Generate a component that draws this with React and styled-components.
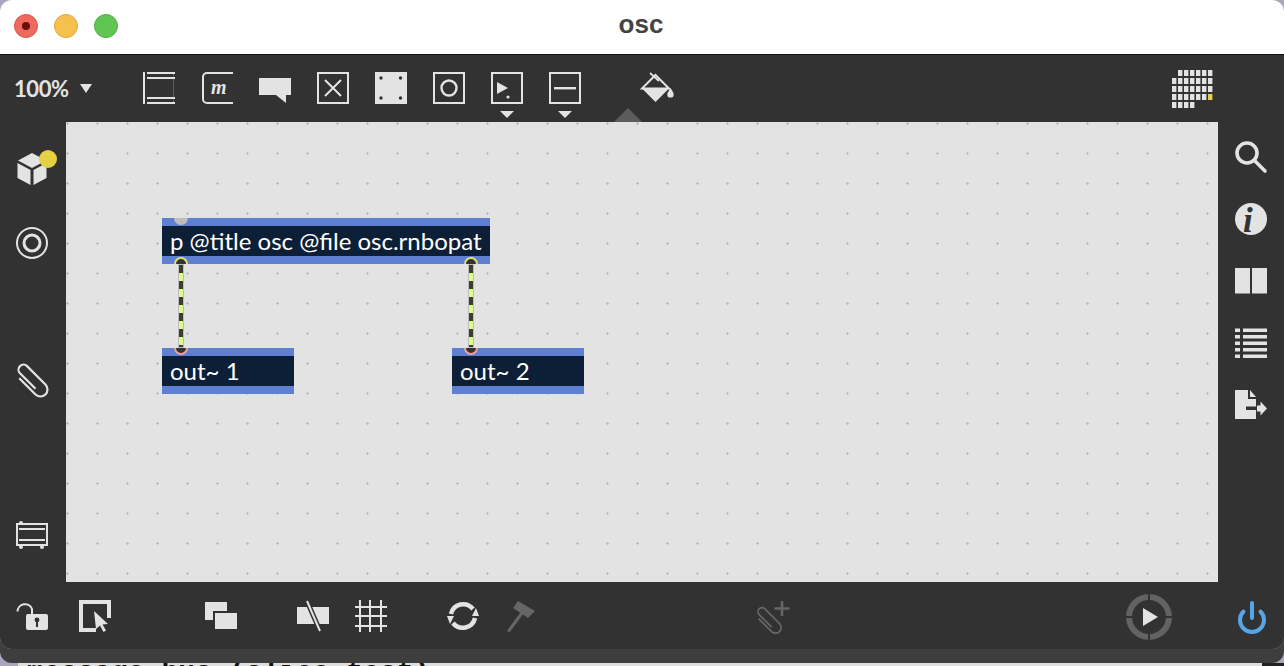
import React from "react"
import styled, { createGlobalStyle } from "styled-components"

const Global = createGlobalStyle`
  html, body {
    margin: 0;
    width: 1284px;
    height: 666px;
    overflow: hidden;
    background: #a7a7bd;
    font-family: "Lato", "Liberation Sans", sans-serif;
  }
`

const LIGHT = "#e3e3e3"
const DARK = "#323232"
const MUTED = "#666666"

const Window = styled.div`
  width: 1284px;
  height: 649px;
  display: flex;
  flex-direction: column;
  border-radius: 12px;
  overflow: hidden;
  box-shadow: 0 14px 0 #3e3e3e;
`

const TitleBar = styled.header`
  position: relative;
  height: 54px;
  flex: none;
  box-sizing: content-box;
  display: flex;
  align-items: center;
  justify-content: center;
  background: #ffffff;
  border-bottom: 1px solid #111111;
`

const Lights = styled.div`
  position: absolute;
  left: 14px;
  top: 14px;
  display: flex;
  gap: 16px;
`

const Light = styled.span`
  width: 24px;
  height: 24px;
  box-sizing: border-box;
  border-radius: 50%;
  background: ${p => p.$color};
  border: 1px solid ${p => p.$edge};
  display: flex;
  align-items: center;
  justify-content: center;
`

const CloseDot = styled.span`
  width: 8px;
  height: 8px;
  border-radius: 50%;
  background: #6b0f0a;
`

const Title = styled.h1`
  margin: 0 2px 6px 0;
  font: bold 26px "Liberation Sans", sans-serif;
  color: #444444;
`

const TopBar = styled.div`
  height: 67px;
  flex: none;
  box-sizing: border-box;
  display: flex;
  align-items: flex-start;
  padding: 17px 72px 0 14px;
  background: ${DARK};
`

const ZoomControl = styled.div`
  width: 129px;
  height: 32px;
  flex: none;
  display: flex;
  align-items: center;
  gap: 11px;
  font-size: 22px;
  font-weight: 700;
  letter-spacing: -0.4px;
  color: ${LIGHT};
`

const ZoomCaret = styled.span`
  width: 0;
  height: 0;
  border-left: 6px solid transparent;
  border-right: 6px solid transparent;
  border-top: 9px solid ${LIGHT};
`

const Tools = styled.div`
  display: flex;
  gap: 26px;
`

const ToolSlot = styled.div`
  position: relative;
  height: 32px;
  margin-left: ${p => p.$ml || 0}px;
  margin-top: ${p => p.$mt || 0}px;
`

const MenuCaret = styled.span`
  position: absolute;
  left: 9px;
  top: 39px;
  width: 0;
  height: 0;
  border-left: 7px solid transparent;
  border-right: 7px solid transparent;
  border-top: 7px solid ${LIGHT};
`

const PanelMarker = styled.span`
  position: absolute;
  left: -27px;
  top: 36px;
  width: 0;
  height: 0;
  border-left: 14px solid transparent;
  border-right: 14px solid transparent;
  border-bottom: 14px solid #5c5c5c;
`

const Middle = styled.div`
  height: 460px;
  flex: none;
  display: flex;
  background: ${DARK};
`

const LeftRail = styled.aside`
  width: 66px;
  flex: none;
  box-sizing: border-box;
  display: flex;
  flex-direction: column;
  align-items: center;
  padding: 31px 2px 31px 0;
`

const RightRail = styled.aside`
  width: 66px;
  flex: none;
  box-sizing: border-box;
  display: flex;
  flex-direction: column;
  align-items: center;
  gap: 30px;
  padding-top: 19px;
`

const RailItem = styled.div`
  position: relative;
  width: 32px;
  height: 32px;
  margin-top: ${p => p.$mt || 0}px;
  ${p => p.$push && "margin-top: auto;"}
`

const Badge = styled.span`
  position: absolute;
  left: 23px;
  top: -3px;
  width: 18px;
  height: 18px;
  border-radius: 50%;
  background: #e6d144;
`

const Canvas = styled.main`
  position: relative;
  flex: 1;
  background-color: ${LIGHT};
  background-image: radial-gradient(circle at 1.5px 1.5px, #bdbdbd 1px, transparent 1.4px);
  background-size: 30px 30px;
`

const PatchObject = styled.div`
  position: absolute;
  left: ${p => p.$x}px;
  top: ${p => p.$y}px;
  width: ${p => p.$w}px;
  height: 46px;
  box-sizing: border-box;
  overflow: hidden;
  background: #0d1f36;
  border-top: 8px solid #5f7fd3;
  border-bottom: 8px solid #5f7fd3;
  padding-left: 8px;
  color: #ffffff;
  font-size: 24px;
  line-height: 29px;
  white-space: nowrap;
`

const Port = styled.span`
  position: absolute;
  left: ${p => p.$x}px;
  top: ${p => p.$y}px;
  width: 14px;
  height: 14px;
  box-sizing: border-box;
  border-radius: 50%;
  background: ${p => p.$fill || "#333333"};
  border: 2px solid ${p => p.$ring};
`

const Cord = styled.div`
  position: absolute;
  left: ${p => p.$x}px;
  top: 142px;
  width: 6px;
  height: 84px;
  box-sizing: border-box;
  border: 1px solid #bcbcbc;
  background: repeating-linear-gradient(to bottom, #3c3f2c 0 8px, #dcfb8c 8px 16px);
`

const BottomBar = styled.footer`
  height: 67px;
  flex: none;
  box-sizing: border-box;
  display: flex;
  align-items: center;
  padding: 1px 0 0 16px;
  background: ${DARK};
`

const BarItem = styled.div`
  display: flex;
  flex: none;
  margin-left: ${p => p.$ml || 0}px;
`

const Backdrop = styled.div`
  margin-top: 14px;
  height: 3px;
  overflow: hidden;
  background: linear-gradient(to right, #a7a7bd 18px, #dedede 18px 1262px, #222222 1262px);
  padding-left: 27px;
  color: #111111;
  font: bold 28px/20px "Liberation Mono", monospace;
  white-space: nowrap;
`

const Glyph = styled.svg`
  display: block;
  flex: none;
  fill: ${p => p.$tone || LIGHT};
  stroke: none;
  overflow: visible;
`

const Icon = ({ w = 32, h = 32, tone, children }) => (
  <Glyph width={w} height={h} viewBox={`0 0 ${w} ${h}`} $tone={tone}>{children}</Glyph>
)

// the stroked parts all share the same settings
const Line = ({ d, c = LIGHT, sw = 2, cap = "butt" }) => (
  <path d={d} fill="none" stroke={c} strokeWidth={sw} strokeLinecap={cap} />
)

const Frame = () => <rect x="1" y="1" width="30" height="30" fill="none" stroke={LIGHT} strokeWidth="2" />

const ClipPath = ({ c }) => (
  <Line c={c} sw="2.2" d="M9 5V28a7 7 0 0 0 14 0V2a5 5 0 0 0-10 0V24" />
)

const gridCells = []
for (let r = 0; r < 5; r++) {
  for (let c = 0; c < 7; c++) {
    if (r === 0 && c === 0) continue
    if (r === 4 && c > 3) continue
    gridCells.push({ r, c, on: r === 3 && c === 6 })
  }
}

const tools = [
  <Icon key="object">
    <rect x="0" y="0" width="2" height="32" />
    <rect x="4" y="0" width="28" height="2" />
    <rect x="4" y="5" width="28" height="2" />
    <rect x="4" y="25" width="28" height="2" />
    <rect x="4" y="30" width="28" height="2" />
    <rect x="30" y="2" width="1" height="28" opacity="0.25" />
  </Icon>,
  <Icon key="message">
    <Line d="M32 1H6a4 4 0 0 0-4 4V27a4 4 0 0 0 4 4H32" />
    <text x="10" y="22" fontFamily="Liberation Serif" fontStyle="italic" fontWeight="bold" fontSize="20" fill={LIGHT}>m</text>
  </Icon>,
  <Icon key="comment">
    <polygon points="0,6 32,6 32,23 27,23 27,31 17,23 0,23" />
  </Icon>,
  <Icon key="button">
    <Frame />
    <Line d="M8 8L24 24M24 8L8 24" />
  </Icon>,
  <Icon key="toggle">
    <rect width="32" height="32" />
    <g fill={DARK}>
      <circle cx="6" cy="6" r="1.7" />
      <circle cx="25.5" cy="6" r="1.7" />
      <circle cx="6" cy="26" r="1.7" />
      <circle cx="25.5" cy="26" r="1.7" />
    </g>
  </Icon>,
  <Icon key="number">
    <Frame />
    <circle cx="16" cy="16" r="7.5" fill="none" stroke={LIGHT} strokeWidth="2.4" />
  </Icon>,
  <Icon key="play">
    <Frame />
    <polygon points="6,10 17,16 6,22" />
    <circle cx="17" cy="25" r="1.6" />
  </Icon>,
  <Icon key="slider">
    <Frame />
    <rect x="5" y="15" width="22" height="2.4" />
  </Icon>,
]

function App() {
  return (
    <>
      <Global />
      <Window>
        <TitleBar>
          <Lights>
            <Light $color="#ee6a5f" $edge="#d9564c"><CloseDot /></Light>
            <Light $color="#f6c04f" $edge="#dfa73a" />
            <Light $color="#61c554" $edge="#51ad45" />
          </Lights>
          <Title>osc</Title>
        </TitleBar>

        <TopBar>
          <ZoomControl>100%<ZoomCaret /></ZoomControl>
          <Tools>
            {tools.map((tool, i) => (
              <ToolSlot key={i}>
                {tool}
                {i >= 6 && <MenuCaret />}
              </ToolSlot>
            ))}
          </Tools>
          <ToolSlot $ml={60}>
            <PanelMarker />
            <Icon w={34}>
              <path d="M14.500 3L28 16.500H1Z" fill="none" stroke={LIGHT} strokeWidth="2" />
              <path d="M1 16.500H28L14.500 30Z" />
              <Line d="M9 1L18 9" sw="1.8" />
              <path d="M29.500 16c1.500 2.800 3.200 4.200 3.200 6.400a3.200 3.200 0 0 1-6.400 0c0-2.200 2-3.600 3.200-6.400Z" />
            </Icon>
          </ToolSlot>
          <ToolSlot $ml={497} $mt={-2}>
            <Icon w={40} h={38}>
              {gridCells.map(({ r, c, on }) => (
                <rect key={`${r}-${c}`} x={c * 6} y={r * 8} width="4.4" height="6" fill={on ? "#e6d144" : LIGHT} />
              ))}
            </Icon>
          </ToolSlot>
        </TopBar>

        <Middle>
          <LeftRail>
            <RailItem>
              <Icon>
                <polygon points="16,0 30,7.500 16,15 2,7.500" />
                <polygon points="1.500,10 14.500,17 14.500,32 1.500,25" />
                <polygon points="17.500,17 30.500,10 30.500,25 17.500,32" />
              </Icon>
              <Badge />
            </RailItem>
            <RailItem $mt={42}>
              <Icon>
                <circle cx="16" cy="16" r="15" fill="none" stroke={LIGHT} strokeWidth="2" />
                <circle cx="16" cy="16" r="8" fill="none" stroke={LIGHT} strokeWidth="3" />
              </Icon>
            </RailItem>
            <RailItem $mt={106}>
              <Icon>
                <g transform="rotate(-45 16 16)"><ClipPath /></g>
              </Icon>
            </RailItem>
            <RailItem $push>
              <Icon>
                <rect x="1" y="5" width="30" height="21" fill="none" stroke={LIGHT} strokeWidth="2" />
                <rect x="3" y="9" width="26" height="2" />
                <rect x="3" y="20" width="26" height="2" />
                <circle cx="5" cy="4" r="2" />
                <circle cx="5" cy="28" r="2" />
                <circle cx="26" cy="28" r="2" />
              </Icon>
            </RailItem>
          </LeftRail>

          <Canvas>
            <PatchObject $x={96} $y={96} $w={328}>p @title osc @file osc.rnbopat</PatchObject>
            <PatchObject $x={96} $y={226} $w={132}>out~ 1</PatchObject>
            <PatchObject $x={386} $y={226} $w={132}>out~ 2</PatchObject>
            <Port $x={108} $y={89} $fill="#bdbdbd" $ring="#bdbdbd" style={{ clipPath: "inset(7px 0 0 0)" }} />
            <Port $x={108} $y={135} $ring="#e3e36a" style={{ clipPath: "inset(0 0 7px 0)" }} />
            <Port $x={398} $y={135} $ring="#e3e36a" style={{ clipPath: "inset(0 0 7px 0)" }} />
            <Port $x={108} $y={219} $ring="#eba58f" style={{ clipPath: "inset(7px 0 0 0)" }} />
            <Port $x={398} $y={219} $ring="#eba58f" style={{ clipPath: "inset(7px 0 0 0)" }} />
            <Cord $x={112} />
            <Cord $x={402} />
          </Canvas>

          <RightRail>
            <RailItem>
              <Icon>
                <circle cx="12" cy="12" r="10" fill="none" stroke={LIGHT} strokeWidth="3.6" />
                <Line d="M19.500 19.500L30 30" sw="3.6" cap="round" />
              </Icon>
            </RailItem>
            <RailItem>
              <Icon>
                <circle cx="16" cy="16" r="16" />
                <text x="8" y="29" fontFamily="Liberation Serif" fontStyle="italic" fontWeight="bold" fontSize="35" fill={DARK}>i</text>
              </Icon>
            </RailItem>
            <RailItem>
              <Icon>
                <rect x="0" y="3" width="15" height="25.500" />
                <rect x="17" y="3" width="15" height="25.500" />
              </Icon>
            </RailItem>
            <RailItem>
              <Icon>
                {[1.5, 8, 14.5, 21, 27.5].map(y => (
                  <g key={y}>
                    <rect x="0" y={y} width="5" height="3.5" />
                    <rect x="8" y={y} width="24" height="3.5" />
                  </g>
                ))}
              </Icon>
            </RailItem>
            <RailItem>
              <Icon>
                <path d="M0 1H13V10H21V30H0Z" />
                <path d="M15 1L21 8H15Z" />
                <rect x="11" y="17.500" width="11" height="3.500" fill={DARK} />
                <polygon points="22,16.500 25.500,16.500 25.500,12.500 32,19.500 25.500,26.500 25.500,22.500 22,22.500" />
              </Icon>
            </RailItem>
          </RightRail>
        </Middle>

        <BottomBar>
          <BarItem>
            <Icon>
              <Line d="M1.500 11.500A7.500 7.500 0 0 1 16 9V15" />
              <rect x="10" y="14" width="22" height="16" rx="2" />
              <circle cx="21" cy="20" r="2.400" fill={DARK} />
              <rect x="20" y="21" width="2" height="6" fill={DARK} />
            </Icon>
          </BarItem>
          <BarItem $ml={31}>
            <Icon>
              <path d="M0 0H32V18H28V4H4V28H17V32H0Z" />
              <polygon points="15,11 29,24 23.500,24.500 27,30.500 24.500,32 21,25.500 17,29" />
            </Icon>
          </BarItem>
          <BarItem $ml={94}>
            <Icon>
              <path d="M0 2H22V11H8V20H0Z" />
              <rect x="10" y="13" width="22" height="16" />
            </Icon>
          </BarItem>
          <BarItem $ml={60}>
            <Icon>
              <rect x="0" y="7" width="32" height="17" />
              <Line d="M9.500 0L23 31" c={DARK} sw="5" />
              <Line d="M10 1L23 31" sw="2" />
            </Icon>
          </BarItem>
          <BarItem $ml={26}>
            <Icon>
              <Line d="M5 0V32M15 0V32M26 0V32M0 7H32M0 16H32M0 26H32" />
            </Icon>
          </BarItem>
          <BarItem $ml={60}>
            <Icon>
              <Line d="M4 14A12.500 12.500 0 0 1 26 9" sw="4.500" />
              <Line d="M28 18A12.500 12.500 0 0 1 6 23" sw="4.500" />
              <polygon points="0,16 7,16 3,24" />
              <polygon points="32,16 25,16 29,8" />
            </Icon>
          </BarItem>
          <BarItem $ml={28}>
            <Icon w={28} tone={MUTED}>
              <polygon points="11,1 28,11 21,18 6,8" />
              <Line d="M15 13L2 30.500" c={MUTED} sw="3" cap="round" />
            </Icon>
          </BarItem>
          <BarItem $ml={222}>
            <Icon w={34} tone={MUTED}>
              <g transform="translate(-1 8) scale(0.8) rotate(-45 16 16)"><ClipPath c={MUTED} /></g>
              <Line d="M25 1V16M17.500 8.500H32.500" c={MUTED} sw="2.600" />
            </Icon>
          </BarItem>
          <BarItem $ml={334}>
            <Icon w={48} h={48}>
              <g transform="translate(0 1)">
                <circle cx="24" cy="24" r="20" fill="none" stroke="#626262" strokeWidth="6" />
                <Line d="M24 0V9M24 39V48M0 24H9M39 24H48" c={DARK} sw="2" />
                <polygon points="18,15 33,24 18,33" />
              </g>
            </Icon>
          </BarItem>
          <BarItem $ml={63}>
            <Icon w={32} h={36}>
              <path d="M7.500 13.500A12 12 0 1 0 24.500 13.500" fill="none" stroke="#55a5e8" strokeWidth="4" strokeLinecap="round" />
              <Line d="M16 5V20" c="#55a5e8" sw="4" cap="round" />
            </Icon>
          </BarItem>
        </BottomBar>
      </Window>
      <Backdrop>message bus (slice test)</Backdrop>
    </>
  )
}

export default App
